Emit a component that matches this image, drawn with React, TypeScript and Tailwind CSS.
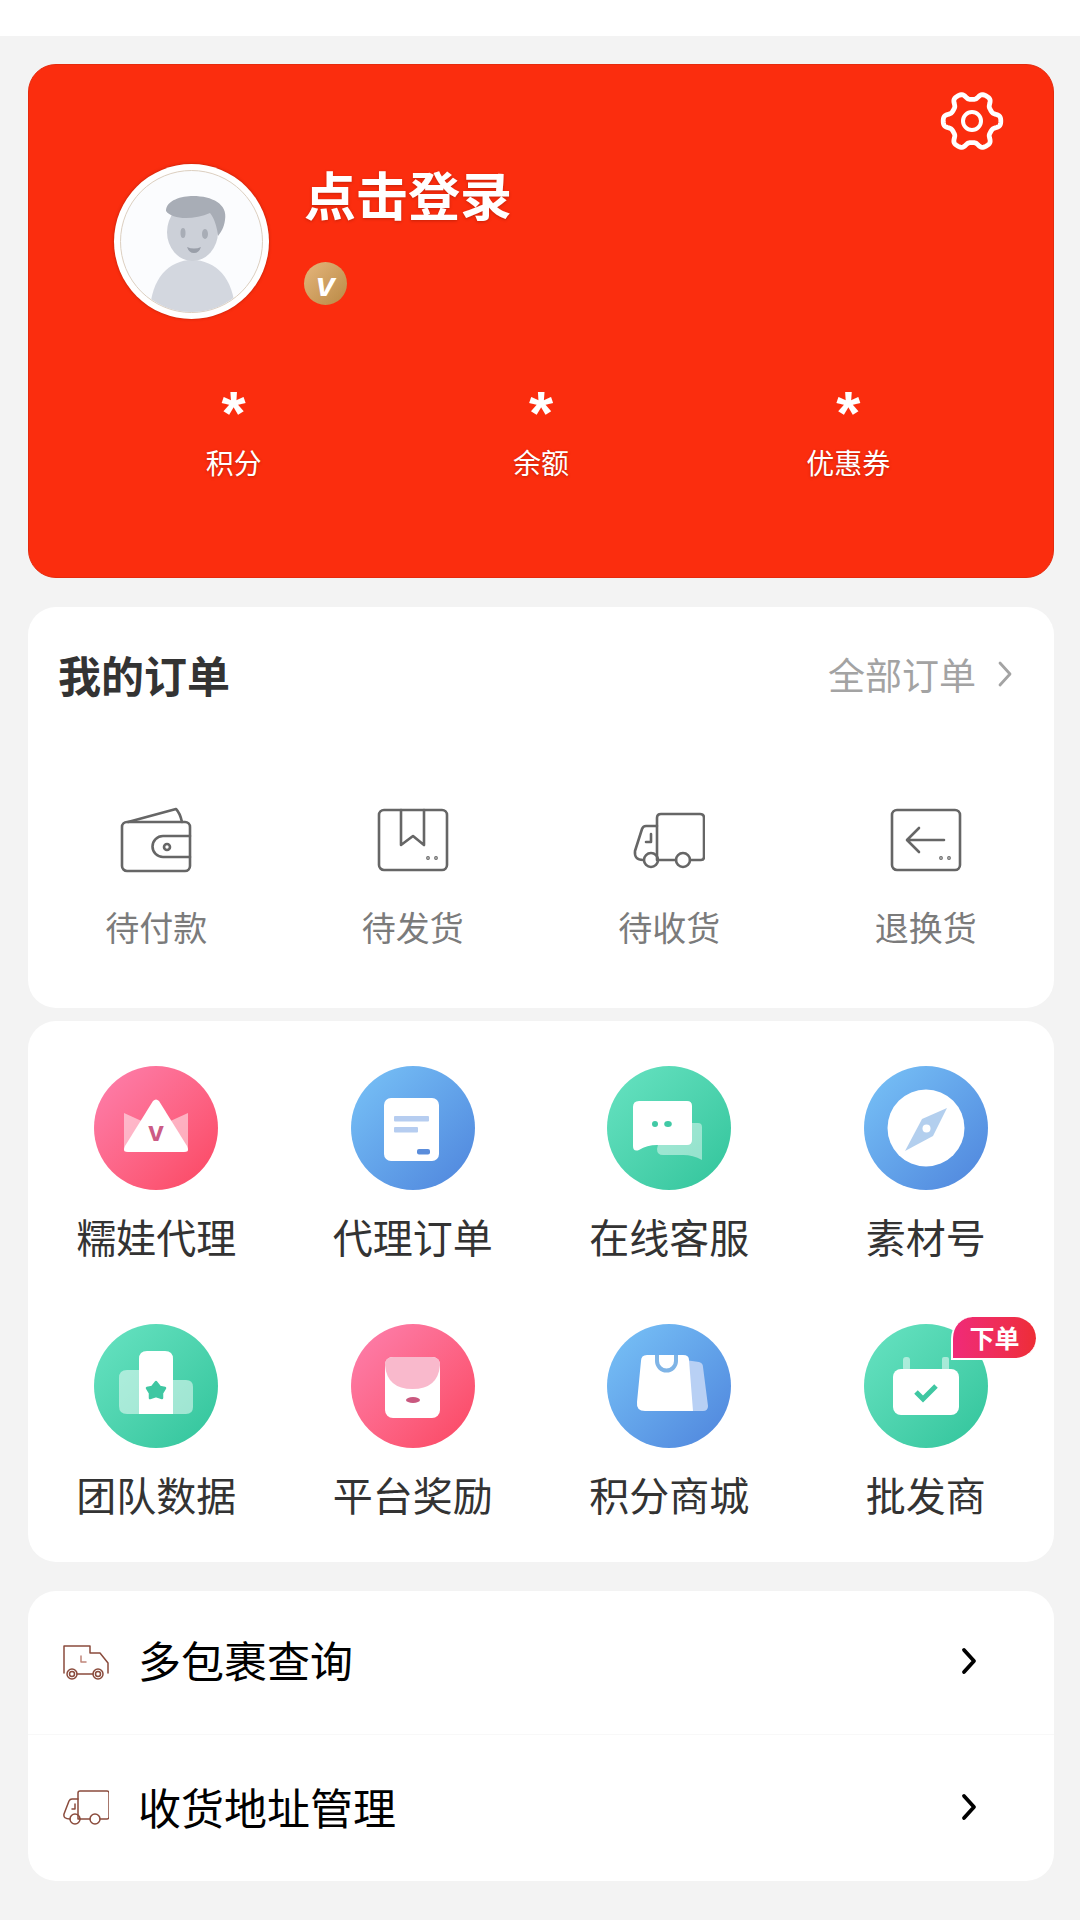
import React from "react";

const font = "font-['Noto_Sans_CJK_SC','Noto_Sans',sans-serif]";

// 6 flat teeth, valleys on top and bottom
const gearPath =
  Array.from({ length: 240 }, (_, i) => {
    const a = (i / 240) * Math.PI * 2;
    const r = 25.2 + (3.6 * Math.tanh(1.8 * Math.cos(6 * a))) / Math.tanh(1.8);
    return `${i === 0 ? "M" : "L"}${(32 + r * Math.cos(a)).toFixed(2)} ${(32 + r * Math.sin(a)).toFixed(2)}`;
  }).join(" ") + " Z";

const Gear = () => (
  <svg viewBox="0 0 64 64" className="absolute top-[24px] right-[49px] w-[64px] h-[64px]" fill="none" stroke="#fff" strokeWidth="4.8" strokeLinejoin="round">
    <path d={gearPath} />
    <circle cx="32" cy="32" r="9" strokeWidth="4" />
  </svg>
);

const Chevron = ({ color, width }: { color: string; width: number }) => (
  <svg viewBox="0 0 16 28" className="w-[16px] h-[28px] shrink-0" fill="none" stroke={color} strokeWidth={width} strokeLinecap="round" strokeLinejoin="round">
    <path d="M3 3 L13 14 L3 25" />
  </svg>
);

const Avatar = () => (
  <div className="w-[155px] h-[155px] shrink-0 rounded-full bg-white p-[6px] shadow-[0_0_3px_rgba(120,20,0,0.5)]">
    <div className="w-full h-full rounded-full border border-[#dccfc0] bg-[#fbfcfe] overflow-hidden">
      <svg viewBox="7 7 141 141" className="w-full h-full">
        <path d="M36 150 C36 115 55 96 78 96 C102 96 121 115 121 150 Z" fill="#d3d7df" />
        <ellipse cx="78.5" cy="68" rx="25.5" ry="29" fill="#ccd0d8" />
        <path d="M52 47 C52 36 68 32 79 32 C98 32 114 40 111 56 C110 64 107 68 104 72 C103 62 100 54 96 49 C80 56 58 56 52 47 Z" fill="#a8adb6" />
        <ellipse cx="69" cy="69" rx="2.5" ry="5" fill="#a8adb6" />
        <ellipse cx="91" cy="70" rx="3" ry="5" fill="#a8adb6" />
        <path d="M73 83 Q80 86 87 83 Q85 89 80 89 Q75 89 73 83 Z" fill="#9a9fa9" />
      </svg>
    </div>
  </div>
);

const VipBadge = () => (
  <div className="w-[43px] h-[43px] rounded-full bg-linear-to-br from-[#e6b67c] to-[#b98a45] flex items-center justify-center">
    <span className="font-['Liberation_Sans',sans-serif] font-bold italic text-[34px] leading-none text-white">v</span>
  </div>
);

const Stat = ({ label }: { label: string }) => (
  <div className="flex flex-col items-center text-white">
    <span className="pt-[1px] font-['Liberation_Sans',sans-serif] font-bold text-[62px] leading-[50px] h-[47px]">*</span>
    <span className="mt-[10px] text-[28px] leading-[36px] [text-shadow:0_1px_3px_rgba(120,20,0,0.45)]">{label}</span>
  </div>
);

const stroke = { fill: "none", stroke: "#666666", strokeWidth: 2.6, strokeLinejoin: "round" as const, strokeLinecap: "round" as const };

const Dots = () => (
  <>
    <circle cx="51" cy="51" r="0.6" />
    <circle cx="59" cy="51" r="0.6" />
  </>
);

const WalletIcon = () => (
  <svg viewBox="0 0 72 66" className="w-[72px] h-[66px]" {...stroke}>
    <path d="M8 15 L56 2 Q60 6 62 15" />
    <rect x="2" y="15" width="68" height="49" rx="5" />
    <path d="M70 29 H43 A10.5 10.5 0 0 0 43 50 H70" />
    <circle cx="47" cy="40" r="3" />
  </svg>
);

const BoxIcon = () => (
  <svg viewBox="0 0 72 66" className="w-[72px] h-[66px]" {...stroke}>
    <rect x="2" y="3" width="68" height="60" rx="5" />
    <path d="M24 3 V38 L36 29 L47 38 V3" />
    <Dots />
  </svg>
);

const TruckIcon = () => (
  <svg viewBox="0 0 72 66" className="w-[72px] h-[66px]" {...stroke}>
    <path d="M57 53 H68 Q71 53 71 50 V11 Q71 7 67 7 H28 Q24 7 24 11 V53 H25" />
    <path d="M24 19 H13 Q10 19 9 22 L2 44 Q1 53 10 53" />
    <circle cx="18" cy="53" r="7" />
    <circle cx="50" cy="53" r="7" />
    <path d="M25 53 H43" />
    <path d="M18 27 V35 H13" />
  </svg>
);

const ReturnIcon = () => (
  <svg viewBox="0 0 72 66" className="w-[72px] h-[66px]" {...stroke}>
    <rect x="2" y="3" width="68" height="60" rx="5" />
    <path d="M54 33 H18 M29 21 L17 33 L29 45" />
    <Dots />
  </svg>
);

const CrownGlyph = () => (
  <svg viewBox="0 0 124 124" className="w-full h-full">
    <path d="M30 47 L52 57 L30 86 Z" fill="#fff" fillOpacity="0.5" />
    <path d="M94 47 L72 57 L94 86 Z" fill="#fff" fillOpacity="0.5" />
    <path d="M59 35 Q62 32 65 35 L93 80 Q96 86 90 86 H34 Q28 86 31 80 Z" fill="#fff" />
    <text x="62" y="75" textAnchor="middle" fontFamily="Liberation Sans" fontWeight="700" fontSize="28" fill="#cc5b85">v</text>
  </svg>
);

const DocGlyph = () => (
  <svg viewBox="0 0 124 124" className="w-full h-full">
    <rect x="33" y="32" width="55" height="63" rx="7" fill="#fff" />
    <rect x="43" y="50" width="35" height="5.5" rx="1" fill="#b6cdf0" />
    <rect x="43" y="61" width="24" height="5.5" rx="1" fill="#b6cdf0" />
    <rect x="66" y="83" width="13" height="5.5" rx="2" fill="#5b8ddb" />
  </svg>
);

const ChatGlyph = () => (
  <svg viewBox="0 0 124 124" className="w-full h-full">
    <path d="M56 57 H91 Q95 57 95 61 V94 Q86 89 76 89 H56 Q50 89 50 83 Z" fill="#fff" fillOpacity="0.45" />
    <path d="M32 35 H80 Q85 35 85 40 V74 Q85 79 80 79 H50 Q40 79 32 84 Q26 86 26 80 V41 Q26 35 32 35 Z" fill="#fff" />
    <ellipse cx="48" cy="58" rx="3" ry="3" fill="#41c9a5" />
    <ellipse cx="61" cy="58" rx="3.8" ry="3" fill="#41c9a5" />
  </svg>
);

const CompassGlyph = () => (
  <svg viewBox="0 0 124 124" className="w-full h-full">
    <circle cx="62" cy="62" r="38.5" fill="#fff" />
    <path d="M83 42 L69 70 L41 85 L58 53 Z" fill="#b3cfee" />
    <circle cx="62.5" cy="62.5" r="4" fill="#fff" />
  </svg>
);

const TeamGlyph = () => (
  <svg viewBox="0 0 124 124" className="w-full h-full">
    <path d="M45 46 H33 Q25 46 25 54 V82 Q25 90 33 90 H45 Z" fill="#fff" fillOpacity="0.5" />
    <path d="M79 56 H92 Q99 56 99 63 V83 Q99 90 92 90 H79 Z" fill="#fff" fillOpacity="0.5" />
    <path d="M45 90 V35 Q45 27 53 27 H71 Q79 27 79 35 V90 Z" fill="#fff" />
    <path d="M62 58 L66 63 L71 64 L68 69 L68 74 L62 72 L56 74 L56 69 L53 64 L58 63 Z" fill="#3fc7a2" stroke="#3fc7a2" strokeWidth="2.5" strokeLinejoin="round" />
  </svg>
);

const EnvelopeGlyph = () => (
  <svg viewBox="0 0 124 124" className="w-full h-full">
    <rect x="34" y="33" width="55" height="61" rx="8" fill="#fff" />
    <path d="M42 33 H81 Q89 33 89 41 Q87 65 61.5 65 Q36 65 34 41 Q34 33 42 33 Z" fill="#f9b9cc" />
    <ellipse cx="62" cy="76" rx="7" ry="3" fill="#c9587f" />
  </svg>
);

const BagGlyph = () => (
  <svg viewBox="0 0 124 124" className="w-full h-full">
    <path d="M78 36 L92 38 Q96 39 96 43 L101 82 Q101 87 96 87 H74 Z" fill="#b8d0f4" />
    <path d="M40 31 H76 Q82 31 82 36 L86 87 H38 Q29 87 30 78 L34 37 Q34 31 40 31 Z" fill="#fff" />
    <path d="M50 31 V37 A9.5 9.5 0 0 0 69 37 V31" fill="none" stroke="#7fb4e6" strokeWidth="4" />
  </svg>
);

const CalendarGlyph = () => (
  <svg viewBox="0 0 124 124" className="w-full h-full">
    <rect x="39" y="33" width="7" height="14" rx="3" fill="#fff" fillOpacity="0.5" />
    <rect x="78" y="33" width="7" height="14" rx="2" fill="#fff" fillOpacity="0.5" />
    <rect x="29" y="45" width="66" height="46" rx="8" fill="#fff" />
    <path d="M52 68 L59 75 L72 62" fill="none" stroke="#3fc7a2" strokeWidth="5" />
  </svg>
);

const orders = [
  { label: "待付款", icon: <WalletIcon /> },
  { label: "待发货", icon: <BoxIcon /> },
  { label: "待收货", icon: <TruckIcon /> },
  { label: "退换货", icon: <ReturnIcon /> },
];

const pink = "bg-linear-to-br from-[#fd80ae] to-[#fb4460]";
const blue = "bg-linear-to-br from-[#79c3f7] to-[#4f84dc]";
const green = "bg-linear-to-br from-[#67e3c2] to-[#2fc49b]";

const tools = [
  { label: "糯娃代理", bg: pink, glyph: <CrownGlyph /> },
  { label: "代理订单", bg: blue, glyph: <DocGlyph /> },
  { label: "在线客服", bg: green, glyph: <ChatGlyph /> },
  { label: "素材号", bg: blue, glyph: <CompassGlyph /> },
  { label: "团队数据", bg: green, glyph: <TeamGlyph /> },
  { label: "平台奖励", bg: pink, glyph: <EnvelopeGlyph /> },
  { label: "积分商城", bg: blue, glyph: <BagGlyph /> },
  { label: "批发商", bg: green, glyph: <CalendarGlyph />, badge: "下单" },
];

const MultiParcelIcon = () => (
  <svg viewBox="0 0 46 36" className="w-[46px] h-[36px]" fill="none" stroke="#8a4b3c" strokeWidth="1.5" strokeLinecap="round" strokeLinejoin="round">
    <path d="M1 28 V1 H27 V8 H37 L45 18 V28" />
    <path d="M14 29 H30" />
    <circle cx="9" cy="29" r="5" />
    <circle cx="9" cy="29" r="2.5" />
    <circle cx="35" cy="29" r="5" />
    <circle cx="35" cy="29" r="2.5" />
    <path d="M18 11 V17 H23" stroke="#c0857a" />
  </svg>
);

const AddressIcon = () => (
  <svg viewBox="0 0 46 36" className="w-[46px] h-[36px]" fill="none" stroke="#8a4b3c" strokeWidth="1.5" strokeLinecap="round" strokeLinejoin="round">
    <path d="M37 29 H44 Q46 29 46 27 V3 Q46 1 44 1 H17 Q15 1 15 3 V29 H17" />
    <path d="M15 9 H9 Q7 9 6 11 L1 24 Q0 29 7 29" />
    <circle cx="12" cy="29" r="5" />
    <circle cx="32" cy="29" r="5" />
    <path d="M17 29 H27" />
    <path d="M12 14 V19 H9" />
  </svg>
);

const App = () => {
  return (
    <div className={`w-[1080px] h-[1920px] bg-[#f3f3f3] overflow-hidden ${font}`}>
      <div className="h-[36px] bg-white" />
      <div className="pl-[28px] pr-[26px] pt-[28px] flex flex-col">
        {/* 상단 프로필 카드 */}
        <div className="relative h-[514px] rounded-[28px] bg-[#fb2d0e] border border-[#e52a0d] pt-[99px]">
          <Gear />
          <div className="flex pl-[85px] gap-[36px]">
            <Avatar />
            <div className="flex flex-col items-start">
              <p className="-mt-[3px] -ml-[1px] text-[52px] leading-[66px] font-bold text-white [text-shadow:0_1px_3px_rgba(120,20,0,0.4)]">点击登录</p>
              <div className="mt-[35px] -ml-[1px]">
                <VipBadge />
              </div>
            </div>
          </div>
          <div className="grid grid-cols-3 px-[51px] mt-[68px]">
            <Stat label="积分" />
            <Stat label="余额" />
            <Stat label="优惠券" />
          </div>
        </div>

        <div className="mt-[29px] h-[401px] rounded-[28px] bg-white">
          <div className="flex items-center justify-between pl-[30px] pr-[41px] pt-[38px]">
            <h2 className="text-[43px] leading-[58px] font-bold text-[#333333]">我的订单</h2>
            <div className="flex items-center gap-[21px] text-[#a3a3a3]">
              <span className="text-[37px] leading-[58px]">全部订单</span>
              <Chevron color="#a3a3a3" width={2.8} />
            </div>
          </div>
          <div className="grid grid-cols-4 mt-[104px]">
            {orders.map((el) => (
              <div key={el.label} className="flex flex-col items-center">
                {el.icon}
                <span className="mt-[31px] text-[34px] leading-[46px] text-[#7b7b7b]">{el.label}</span>
              </div>
            ))}
          </div>
        </div>

        <div className="mt-[13px] h-[541px] rounded-[28px] bg-white pt-[45px] grid grid-cols-4 content-start gap-y-[60px]">
          {tools.map((el) => (
            <div key={el.label} className="relative flex flex-col items-center">
              <div className={`w-[124px] h-[124px] rounded-full ${el.bg}`}>{el.glyph}</div>
              <span className="mt-[18px] text-[40px] leading-[56px] text-[#333333]">{el.label}</span>
              {el.badge && (
                <span className="absolute top-[-7px] right-[18px] w-[85px] h-[43px] flex items-center justify-center rounded-full rounded-bl-none border-l-[2px] border-b-[2px] border-white bg-linear-to-r from-[#f02a78] to-[#ee2d35] text-white text-[25px] leading-none font-bold">
                  {el.badge}
                </span>
              )}
            </div>
          ))}
        </div>

        <div className="mt-[29px] h-[290px] rounded-[28px] bg-white flex flex-col">
          <div className="h-[144px] flex items-center pl-[35px] pr-[77px] border-b border-[#f8f8f8]">
            <MultiParcelIcon />
            <span className="ml-[29px] mb-[7px] text-[43px] leading-[58px] text-black flex-1">多包裹查询</span>
            <div className="mb-[3px]">
              <Chevron color="#000000" width={3.8} />
            </div>
          </div>
          <div className="h-[146px] flex items-center pl-[35px] pr-[77px]">
            <AddressIcon />
            <span className="ml-[29px] mb-[5px] text-[43px] leading-[58px] text-black flex-1">收货地址管理</span>
            <div className="mb-[3px]">
              <Chevron color="#000000" width={3.8} />
            </div>
          </div>
        </div>
      </div>
    </div>
  );
};

export default App;
